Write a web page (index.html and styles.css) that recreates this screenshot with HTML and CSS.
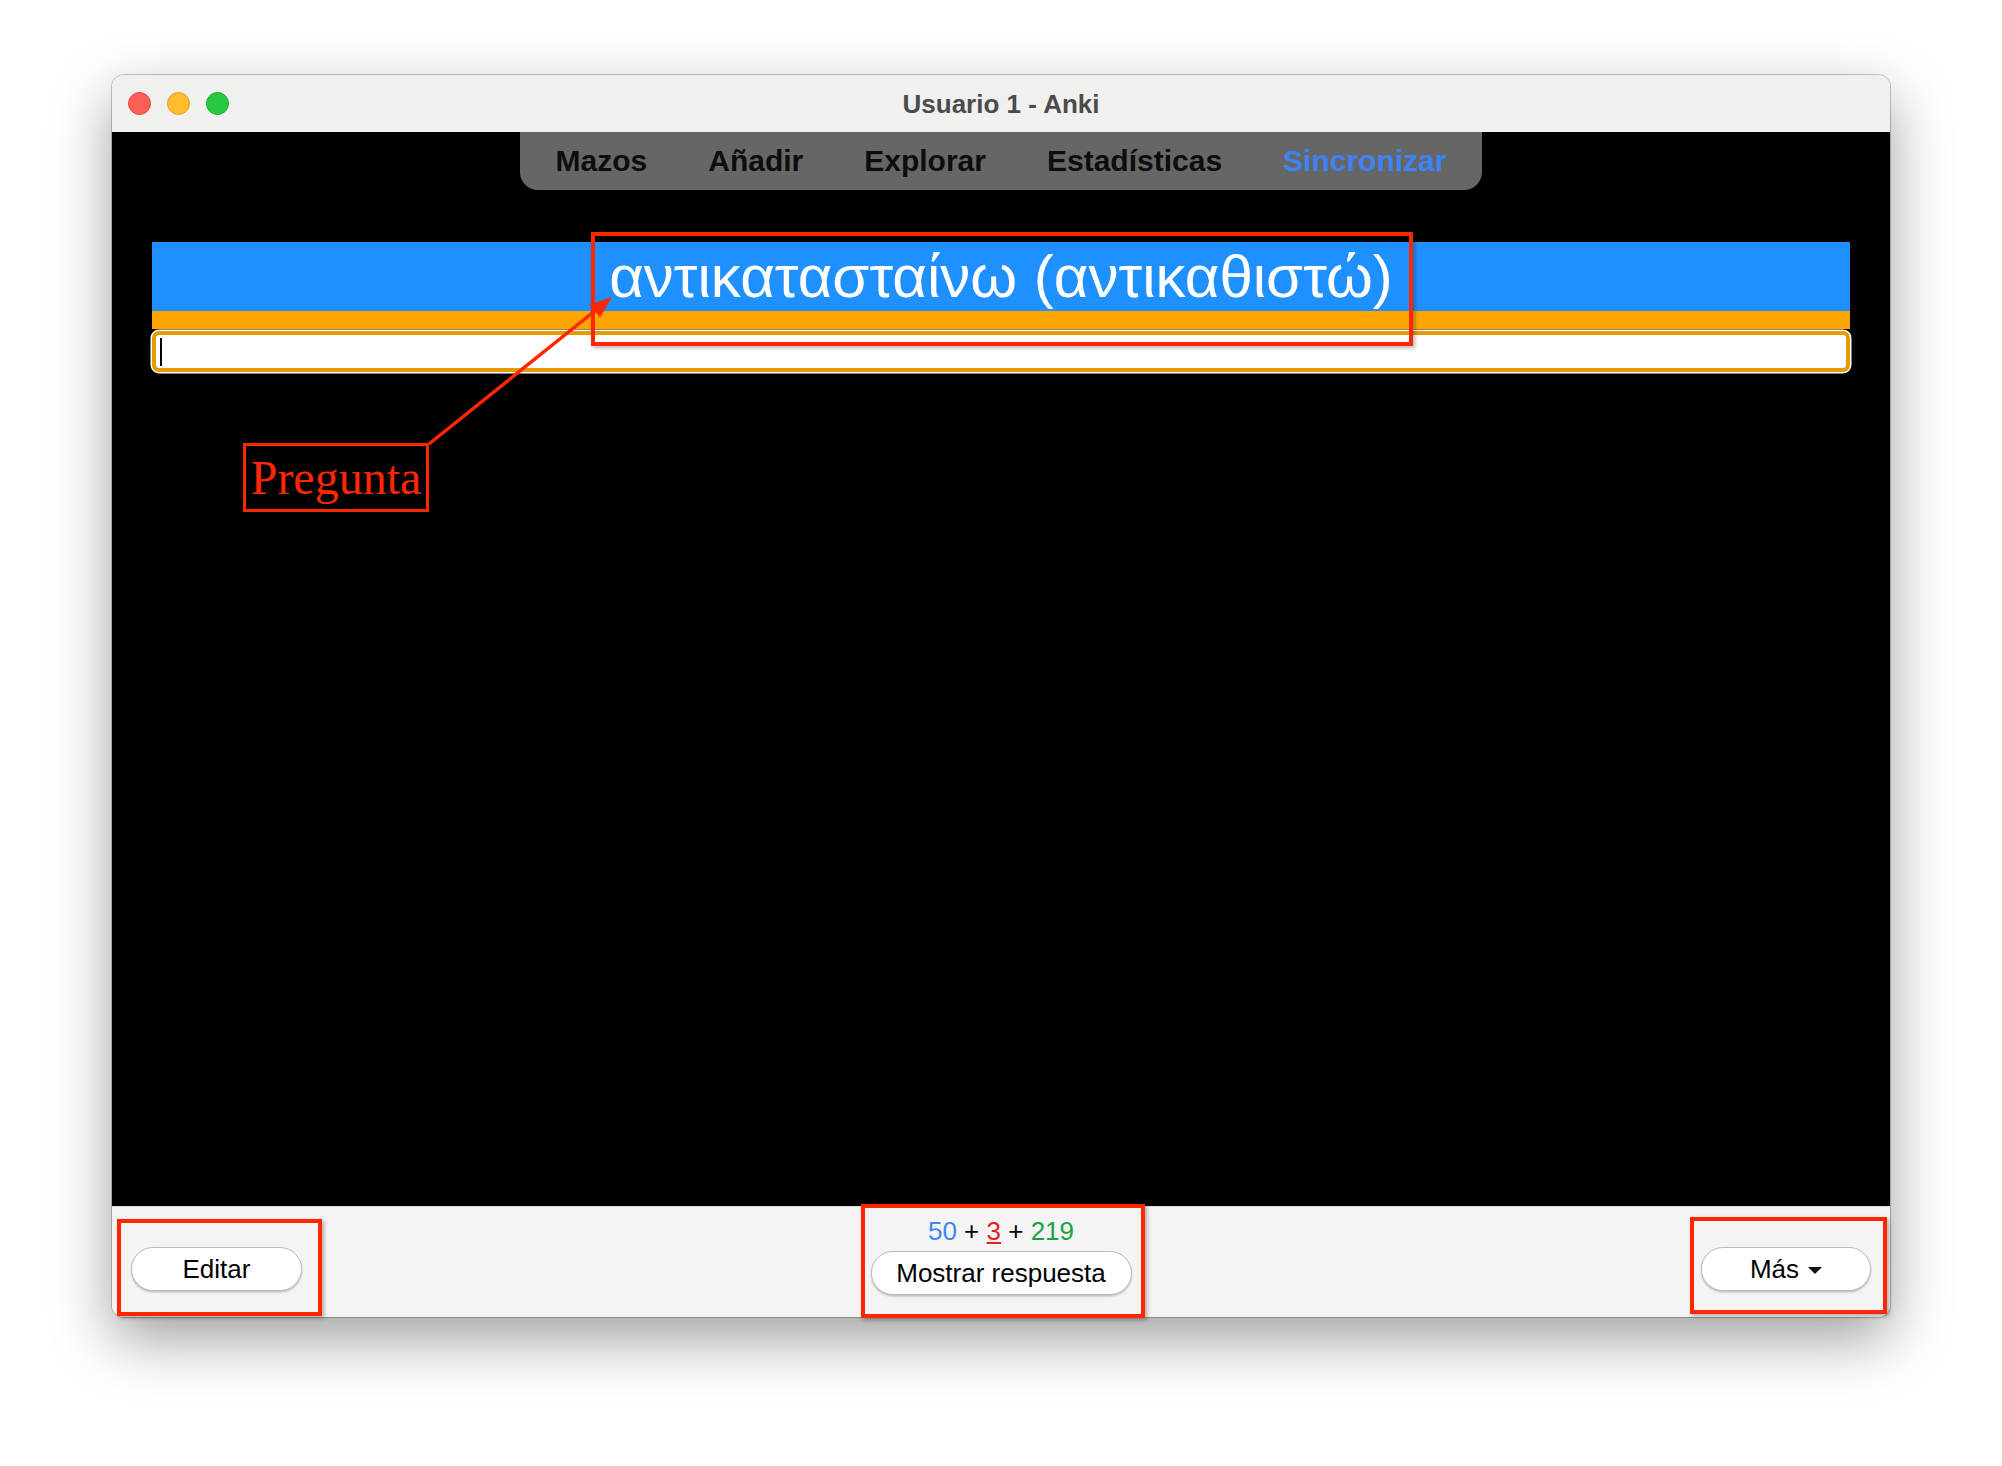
FILE: index.html
```html
<!DOCTYPE html>
<html lang="es">
<head>
<meta charset="utf-8">
<title>Usuario 1 - Anki</title>
<link rel="stylesheet" href="styles.css">
</head>
<body>
<div class="window">
  <div class="titlebar">
    <div class="lights">
      <span class="light red"></span>
      <span class="light yellow"></span>
      <span class="light green"></span>
    </div>
    <div class="title">Usuario 1 - Anki</div>
  </div>
  <div class="content">
    <nav class="toolbar">
      <span class="tab">Mazos</span>
      <span class="tab">Añadir</span>
      <span class="tab">Explorar</span>
      <span class="tab">Estadísticas</span>
      <span class="tab sync">Sincronizar</span>
    </nav>
    <div class="card">
      <div class="question">αντικατασταίνω (αντικαθιστώ)</div>
      <div class="strip"></div>
      <div class="answer-input"><span class="caret"></span></div>
    </div>
  </div>
  <div class="bottombar">
    <div class="left"><button class="btn btn-edit">Editar</button></div>
    <div class="middle">
      <div class="counts"><span class="c-new">50</span> + <span class="c-learn">3</span> + <span class="c-due">219</span></div>
      <button class="btn btn-show">Mostrar respuesta</button>
    </div>
    <div class="right"><button class="btn btn-more">Más <span class="tri"></span></button></div>
  </div>
</div>

<div class="anno anno-question"></div>
<div class="anno anno-label">Pregunta</div>
<div class="anno anno-edit"></div>
<div class="anno anno-show"></div>
<div class="anno anno-more"></div>
<svg class="arrow" width="2002" height="1466" viewBox="0 0 2002 1466">
  <line x1="429" y1="444" x2="596" y2="310" stroke="#ff2600" stroke-width="3.5"/>
  <polygon points="612,297 600,317.5 589.5,304.5" fill="#ff2600"/>
</svg>
</body>
</html>
```

FILE: styles.css
```css
html, body {
  margin: 0;
  padding: 0;
}
body {
  position: relative;
  width: 2002px;
  height: 1466px;
  overflow: hidden;
  background: #ffffff;
  font-family: "Liberation Sans", Arial, "Noto Sans", sans-serif;
}
.window {
  margin: 75px 0 0 112px;
  width: 1778px;
  height: 1242px;
  border-radius: 12px;
  overflow: hidden;
  box-shadow: 0 0 0 1px rgba(0,0,0,0.22), 0 22px 60px rgba(0,0,0,0.38);
  display: flex;
  flex-direction: column;
}
.titlebar {
  position: relative;
  height: 57px;
  flex: none;
  background: #f0f0ee;
  display: flex;
  align-items: center;
  justify-content: center;
}
.lights {
  position: absolute;
  left: 16px;
  top: 17px;
  display: flex;
  gap: 16px;
}
.light {
  width: 23px;
  height: 23px;
  border-radius: 50%;
  box-sizing: border-box;
}
.light.red { background: #fe5f57; border: 1px solid #e14942; }
.light.yellow { background: #febc2e; border: 1px solid #dfa023; }
.light.green { background: #28c840; border: 1px solid #1aab29; }
.title {
  font-size: 26px;
  font-weight: 700;
  color: #4b4b4b;
  margin-top: 2px;
}
.content {
  height: 1074px;
  flex: none;
  background: #000;
  padding: 0 40px;
  box-sizing: border-box;
  display: flex;
  flex-direction: column;
  align-items: center;
}
.toolbar {
  width: 962px;
  height: 58px;
  background: #666666;
  border-radius: 0 0 18px 18px;
  display: flex;
  justify-content: center;
  gap: 61px;
  line-height: 58px;
  font-size: 30px;
  font-weight: 700;
}
.tab { color: #0d0d0d; }
.tab.sync { color: #3d83f6; }
.card {
  margin-top: 52px;
  width: 100%;
}
.question {
  height: 69px;
  background: #1e90ff;
  color: #ffffff;
  font-size: 60px;
  line-height: 69px;
  text-align: center;
  white-space: nowrap;
}
.strip {
  height: 18px;
  background: #ffa500;
}
.answer-input {
  margin-top: 2px;
  height: 41px;
  box-sizing: border-box;
  border: 4px solid #e69a00;
  border-radius: 7px;
  background: #ffffff;
  box-shadow: 0 0 0 1.5px #ffffff;
  display: flex;
  align-items: center;
  padding-left: 4px;
}
.caret {
  width: 2px;
  height: 28px;
  background: #000;
}
.bottombar {
  height: 111px;
  flex: none;
  box-sizing: border-box;
  background: #f4f4f4;
  border-top: 1px solid #dedede;
  padding: 0 19px;
  display: grid;
  grid-template-columns: 1fr auto 1fr;
}
.left { padding-top: 40px; }
.right { padding-top: 40px; justify-self: end; }
.middle {
  padding-top: 9px;
  display: flex;
  flex-direction: column;
  align-items: center;
}
.counts {
  font-size: 26px;
  line-height: 30px;
  color: #000;
}
.c-new { color: #3f86f6; }
.c-learn { color: #e0241f; text-decoration: underline; }
.c-due { color: #1d9f48; }
.btn {
  font-family: "Liberation Sans", Arial, sans-serif;
  font-size: 26px;
  color: #000;
  background: #ffffff;
  border: 1.5px solid #bdbdbd;
  border-radius: 23px;
  box-shadow: 0 1.5px 2px rgba(0,0,0,0.22);
  height: 44px;
  padding: 0;
  display: flex;
  align-items: center;
  justify-content: center;
}
.btn-edit { width: 171px; }
.btn-show { width: 261px; margin-top: 5px; }
.btn-more { width: 170px; gap: 9px; }
.tri {
  width: 0;
  height: 0;
  border-left: 7.5px solid transparent;
  border-right: 7.5px solid transparent;
  border-top: 7px solid #111;
  margin-top: 2px;
}
.anno {
  position: absolute;
  box-sizing: border-box;
  border: 4px solid #ff2600;
  box-shadow: 2px 2px 4px rgba(0,0,0,0.3);
}
.anno-question { left: 591px; top: 232px; width: 822px; height: 114px; }
.anno-edit { left: 117px; top: 1219px; width: 205px; height: 97px; }
.anno-show { left: 861px; top: 1204px; width: 284px; height: 114px; }
.anno-more { left: 1690px; top: 1217px; width: 197px; height: 97px; }
.anno-label {
  left: 243px;
  top: 443px;
  width: 186px;
  height: 69px;
  border-width: 3px;
  box-shadow: none;
  color: #ff2600;
  font-family: "Liberation Serif", "Times New Roman", serif;
  font-size: 48px;
  line-height: 63px;
  text-align: center;
}
.arrow {
  position: absolute;
  left: 0;
  top: 0;
  pointer-events: none;
}
```
